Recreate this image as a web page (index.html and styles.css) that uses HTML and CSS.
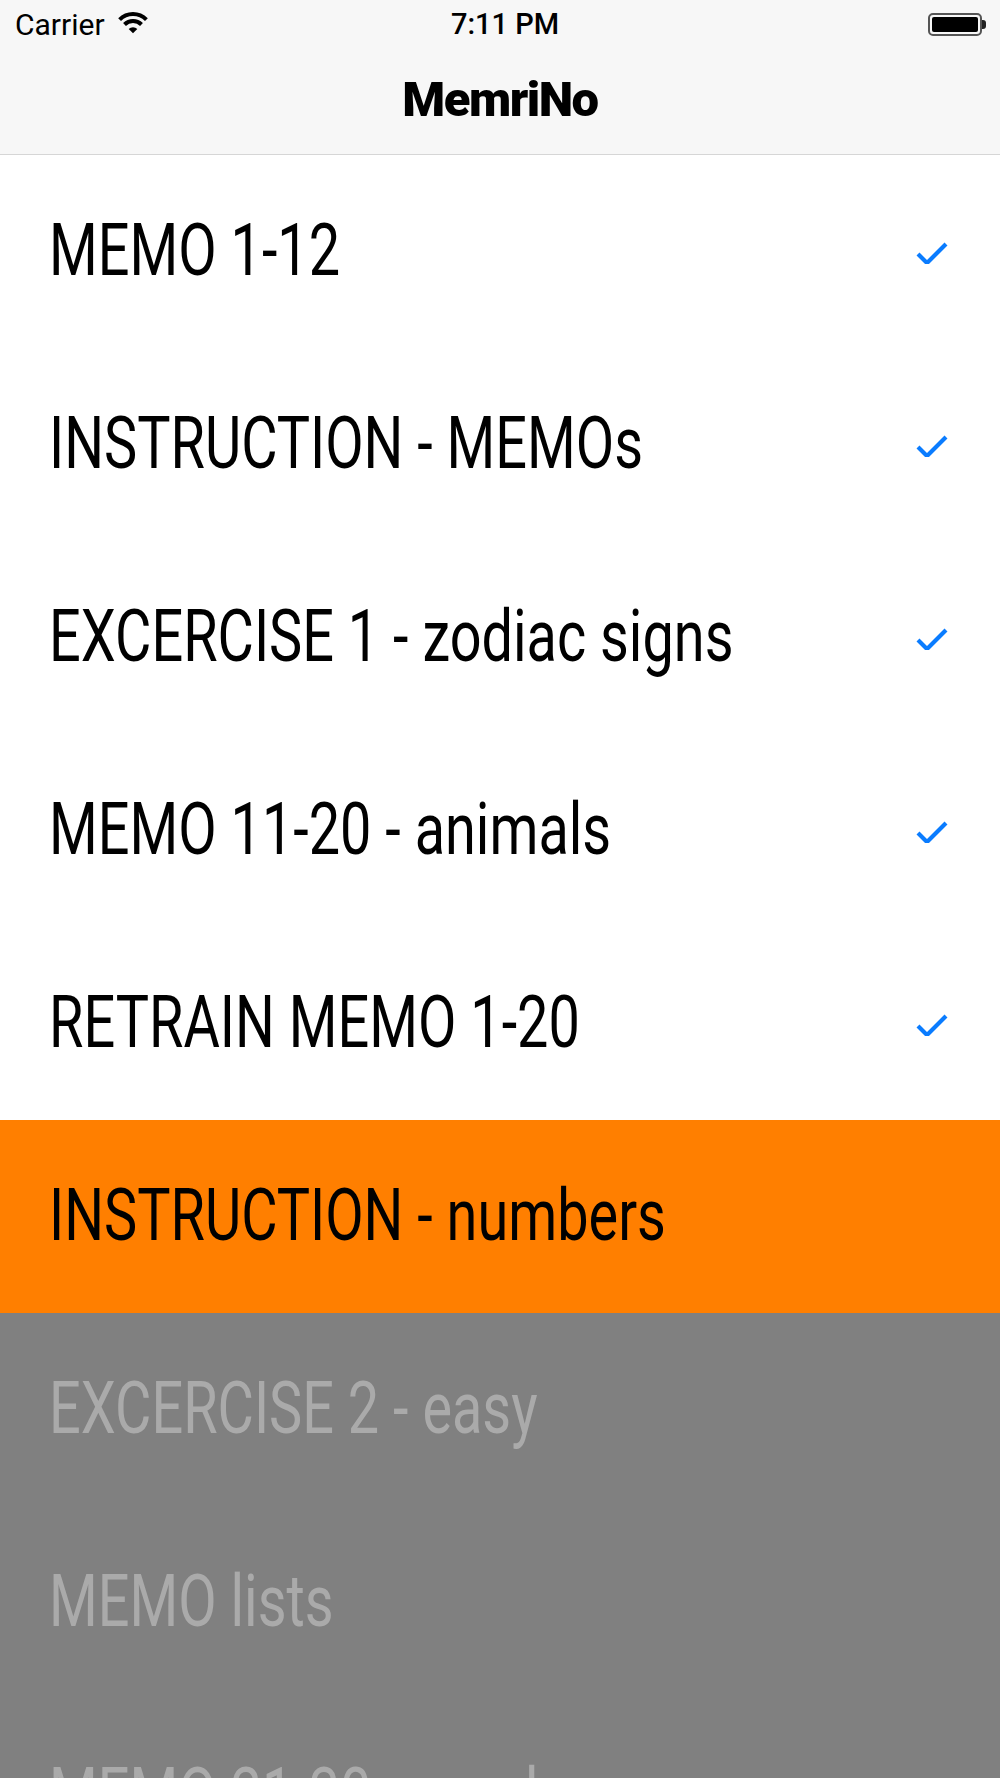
FILE: index.html
```html
<!DOCTYPE html>
<html lang="en">
<head>
  <meta charset="UTF-8" />
  <title>MemriNo</title>
  <link rel="stylesheet" href="styles.css">
</head>
<body>
  <div class="statusbar">
    <div class="status-left">
      <span class="carrier">Carrier</span>
      <svg class="wifi" width="30" height="23" viewBox="0 0 30 23">
        <path d="M1.6 8.6 A19 19 0 0 1 28.4 8.6" fill="none" stroke="#000" stroke-width="4" />
        <path d="M6.5 13.5 A12 12 0 0 1 23.5 13.5" fill="none" stroke="#000" stroke-width="4" />
        <path d="M15 22.3 L10.7 18 A6 6 0 0 1 19.3 18 Z" fill="#000" />
      </svg>
    </div>
    <span class="time">7:11 PM</span>
    <div class="status-right">
      <div class="battery"><div class="battery-fill"></div></div>
      <div class="battery-nub"></div>
    </div>
  </div>

  <div class="navbar">
    <span class="nav-title">MemriNo</span>
  </div>

  <ul class="lessons">
    <li class="lesson done"><span class="label">MEMO 1-12</span><svg class="check" width="32" height="22" viewBox="0 0 32 22"><path d="M2 12 L11 21 L30 2" fill="none" stroke="#0a7cff" stroke-width="4.2" /></svg></li>
    <li class="lesson done"><span class="label">INSTRUCTION - MEMOs</span><svg class="check" width="32" height="22" viewBox="0 0 32 22"><path d="M2 12 L11 21 L30 2" fill="none" stroke="#0a7cff" stroke-width="4.2" /></svg></li>
    <li class="lesson done"><span class="label">EXCERCISE 1 - zodiac signs</span><svg class="check" width="32" height="22" viewBox="0 0 32 22"><path d="M2 12 L11 21 L30 2" fill="none" stroke="#0a7cff" stroke-width="4.2" /></svg></li>
    <li class="lesson done"><span class="label">MEMO 11-20 - animals</span><svg class="check" width="32" height="22" viewBox="0 0 32 22"><path d="M2 12 L11 21 L30 2" fill="none" stroke="#0a7cff" stroke-width="4.2" /></svg></li>
    <li class="lesson done"><span class="label">RETRAIN MEMO 1-20</span><svg class="check" width="32" height="22" viewBox="0 0 32 22"><path d="M2 12 L11 21 L30 2" fill="none" stroke="#0a7cff" stroke-width="4.2" /></svg></li>
    <li class="lesson current"><span class="label">INSTRUCTION - numbers</span></li>
    <li class="lesson locked"><span class="label">EXCERCISE 2 - easy</span></li>
    <li class="lesson locked"><span class="label">MEMO lists</span></li>
    <li class="lesson locked"><span class="label">MEMO 21-30 - words</span></li>
  </ul>
</body>
</html>
```

FILE: styles.css
```css
body {
  margin: 0;
  width: 1000px;
  height: 1778px;
  overflow: hidden;
  background-color: #808080;
  font-family: Roboto, "Liberation Sans", sans-serif;
  color: #000;
}
.statusbar {
  height: 48px;
  background-color: #f7f7f7;
  display: flex;
  align-items: center;
  justify-content: space-between;
  padding: 0 14px 0 15px;
  position: relative;
}
.status-left {
  display: flex;
  align-items: center;
  gap: 13px;
}
.carrier {
  font-size: 30px;
  line-height: 1;
  margin-top: 1px;
}
.wifi {
  display: block;
  margin-top: -3px;
}
.time {
  position: absolute;
  left: 0;
  right: 0;
  text-align: center;
  font-size: 29px;
  font-weight: 500;
  line-height: 1;
  padding-left: 10px;
}
.status-right {
  display: flex;
  align-items: center;
}
.battery {
  border: 2px solid #555;
  border-radius: 5px;
  padding: 2px;
  width: 46px;
  height: 15px;
}
.battery-fill {
  width: 100%;
  height: 100%;
  background-color: #000;
  border-radius: 2px;
}
.battery-nub {
  width: 4px;
  height: 9px;
  background-color: #222;
  border-radius: 0 3px 3px 0;
}
.navbar {
  height: 106px;
  background-color: #f7f7f7;
  border-bottom: 1px solid #d6d6d6;
  display: flex;
  align-items: center;
  justify-content: center;
}
.nav-title {
  font-size: 49px;
  font-weight: 900;
  letter-spacing: -1.5px;
  line-height: 1;
  margin-top: -4px;
}
.lessons {
  list-style: none;
  margin: 0;
  padding: 0;
}
.lesson {
  height: 193px;
  display: flex;
  align-items: center;
  padding: 0 52px 0 49px;
  overflow: hidden;
}
.label {
  flex: 1 1 0;
  min-width: 0;
  font-size: 73px;
  line-height: 1;
  white-space: nowrap;
  transform: scaleX(0.765);
  transform-origin: left center;
  margin-top: -3px;
}
.check {
  flex-shrink: 0;
  display: block;
  margin-top: 2px;
}
.done {
  background-color: #fff;
}
.current {
  background-color: #ff7f00;
}
.locked {
  background-color: #808080;
  color: #aaaaaa;
}
```
